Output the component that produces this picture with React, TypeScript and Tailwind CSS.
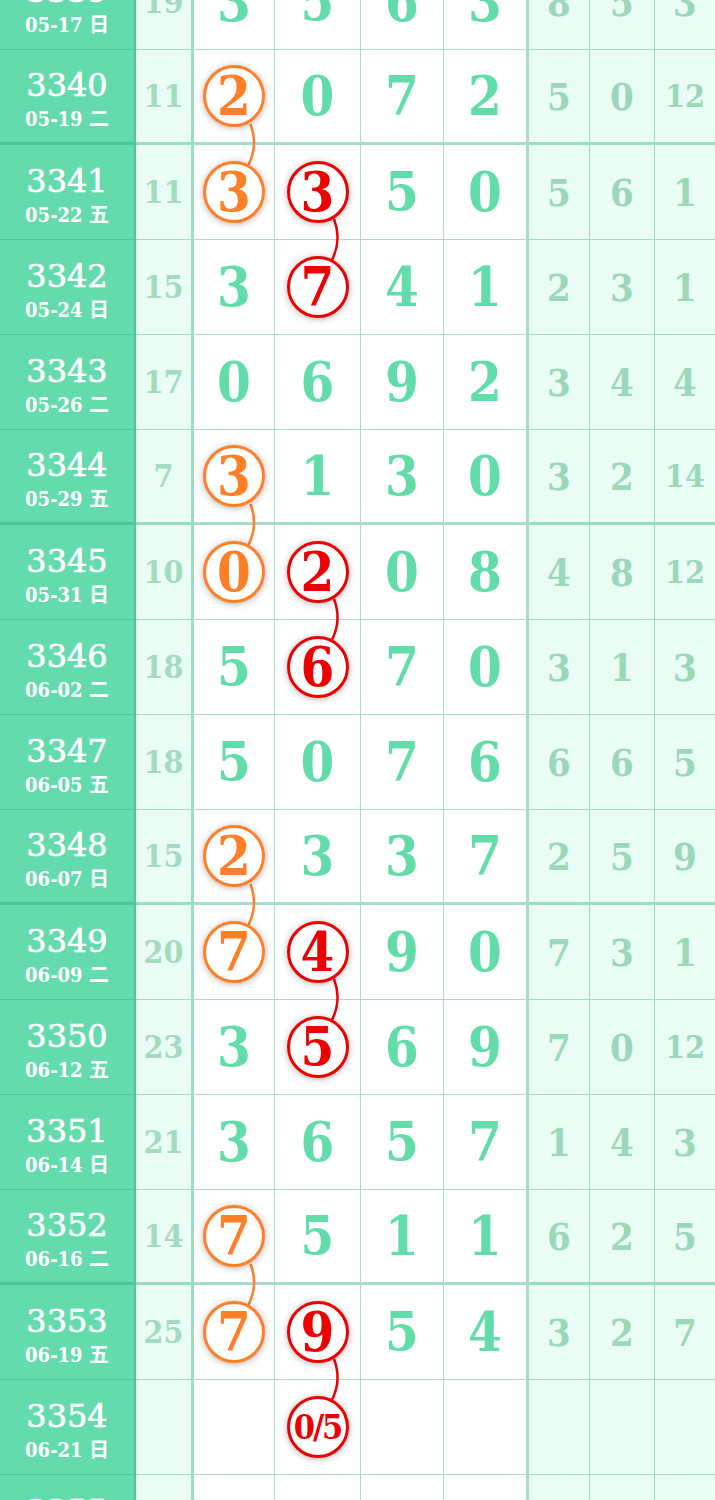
import React from "react";

type Row = {
  no: string;
  date: string;
  s: string;
  d: string[];
  r: string[];
  oc?: boolean;
  rc?: boolean;
};

const rows: Row[] = [
  { no: "3339", date: "05-17 日", s: "19", d: ["3", "5", "6", "3"], r: ["8", "5", "3"] },
  { no: "3340", date: "05-19 二", s: "11", d: ["2", "0", "7", "2"], r: ["5", "0", "12"], oc: true },
  { no: "3341", date: "05-22 五", s: "11", d: ["3", "3", "5", "0"], r: ["5", "6", "1"], oc: true, rc: true },
  { no: "3342", date: "05-24 日", s: "15", d: ["3", "7", "4", "1"], r: ["2", "3", "1"], rc: true },
  { no: "3343", date: "05-26 二", s: "17", d: ["0", "6", "9", "2"], r: ["3", "4", "4"] },
  { no: "3344", date: "05-29 五", s: "7", d: ["3", "1", "3", "0"], r: ["3", "2", "14"], oc: true },
  { no: "3345", date: "05-31 日", s: "10", d: ["0", "2", "0", "8"], r: ["4", "8", "12"], oc: true, rc: true },
  { no: "3346", date: "06-02 二", s: "18", d: ["5", "6", "7", "0"], r: ["3", "1", "3"], rc: true },
  { no: "3347", date: "06-05 五", s: "18", d: ["5", "0", "7", "6"], r: ["6", "6", "5"] },
  { no: "3348", date: "06-07 日", s: "15", d: ["2", "3", "3", "7"], r: ["2", "5", "9"], oc: true },
  { no: "3349", date: "06-09 二", s: "20", d: ["7", "4", "9", "0"], r: ["7", "3", "1"], oc: true, rc: true },
  { no: "3350", date: "06-12 五", s: "23", d: ["3", "5", "6", "9"], r: ["7", "0", "12"], rc: true },
  { no: "3351", date: "06-14 日", s: "21", d: ["3", "6", "5", "7"], r: ["1", "4", "3"] },
  { no: "3352", date: "06-16 二", s: "14", d: ["7", "5", "1", "1"], r: ["6", "2", "5"], oc: true },
  { no: "3353", date: "06-19 五", s: "25", d: ["7", "9", "5", "4"], r: ["3", "2", "7"], oc: true, rc: true },
  { no: "3354", date: "06-21 日", s: "", d: ["", "0/5", "", ""], r: ["", "", ""], rc: true },
  { no: "3355", date: "06-23 二", s: "", d: ["", "", "", ""], r: ["", "", ""] },
];

const ROW_H = 95;
const mainW = ["w-[81px]", "w-[86px]", "w-[83px]", "w-[85px]"];
const sideW = ["w-[61px]", "w-[65px]", "w-[60px]"];
const COND = "font-['DejaVu_Serif_Condensed','DejaVu_Serif','Noto_Sans_CJK_SC',serif]";

// rows joined by a line: [fromRow, toRow, column centre, colour]
const links: [number, number, number, string][] = [
  [1, 2, 234.5, "#ff7f27"],
  [5, 6, 234.5, "#ff7f27"],
  [9, 10, 234.5, "#ff7f27"],
  [13, 14, 234.5, "#ff7f27"],
  [2, 3, 318, "#ee0000"],
  [6, 7, 318, "#ee0000"],
  [10, 11, 318, "#ee0000"],
  [14, 15, 318, "#ee0000"],
];

function Ball({ v, red }: { v: string; red?: boolean }) {
  const small = v.length > 1;
  return (
    <div
      className={`relative z-10 flex h-[62px] w-[62px] items-center justify-center rounded-full border-[3px] bg-white font-bold leading-none shadow-[0_1px_7px_rgba(0,0,0,0.3)] ${COND} ${
        red ? "border-[#ee0000] text-[#ee0000]" : "border-[#ff7f27] text-[#ff7f27]"
      } ${small ? "text-[34px] tracking-[-2px]" : "text-[54px]"}`}
    >
      {v}
    </div>
  );
}

export default function App() {
  return (
    <div className="h-[1500px] w-[715px] overflow-hidden bg-white font-['DejaVu_Serif','Noto_Sans_CJK_SC',serif]">
      <div className="relative -mt-[45px]">
        <svg
          className="pointer-events-none absolute left-0 top-0"
          width={715}
          height={rows.length * ROW_H}
        >
          {links.map(([a, b, cx, c], i) => {
            const y1 = a * ROW_H + 47 + 27;
            const y2 = b * ROW_H + 47 - 27;
            return (
              <path
                key={i}
                d={`M ${cx + 16} ${y1} Q ${cx + 24} ${(y1 + y2) / 2} ${cx + 14} ${y2}`}
                fill="none"
                stroke={c}
                strokeWidth={2.5}
              />
            );
          })}
        </svg>

        {rows.map((row, i) => {
          const b = `border-[rgba(40,170,120,0.4)] ${i % 4 === 1 ? "border-b-[3px]" : "border-b"}`;
          return (
            <div key={row.no} className="flex h-[95px]">
              <div
                className={`flex w-[136px] flex-col items-center justify-center border-r-2 bg-[#64dbad] pt-[5px] text-white ${b}`}
              >
                <span className="text-[32px] leading-[34px] [-webkit-text-stroke:0.6px_white]">{row.no}</span>
                <span className={`mt-[6px] text-[20px] font-bold leading-[22px] ${COND}`}>{row.date}</span>
              </div>
              <div
                className={`flex w-[58px] items-center justify-center border-r-[3px] bg-[#e9fdf5] text-[32px] font-bold text-[#a3dbc0] ${COND} ${b}`}
              >
                {row.s}
              </div>
              {row.d.map((v, j) => {
                const ball = (j === 0 && row.oc) || (j === 1 && row.rc);
                return (
                  <div
                    key={j}
                    className={`flex ${mainW[j]} items-center justify-center ${b} ${
                      j === 3 ? "border-r-[3px]" : "border-r"
                    }`}
                  >
                    {ball ? (
                      <Ball v={v} red={j === 1} />
                    ) : (
                      <span className={`text-[54px] font-bold leading-none text-[#62dca9] ${COND}`}>{v}</span>
                    )}
                  </div>
                );
              })}
              {row.r.map((v, j) => (
                <div
                  key={j}
                  className={`flex ${sideW[j]} items-center justify-center bg-[#e9fdf5] font-bold text-[#9bd7b9] ${COND} ${b} ${
                    j < 2 ? "border-r" : ""
                  } ${v.length > 1 ? "text-[32px]" : "text-[38px]"}`}
                >
                  {v}
                </div>
              ))}
            </div>
          );
        })}
      </div>
    </div>
  );
}
